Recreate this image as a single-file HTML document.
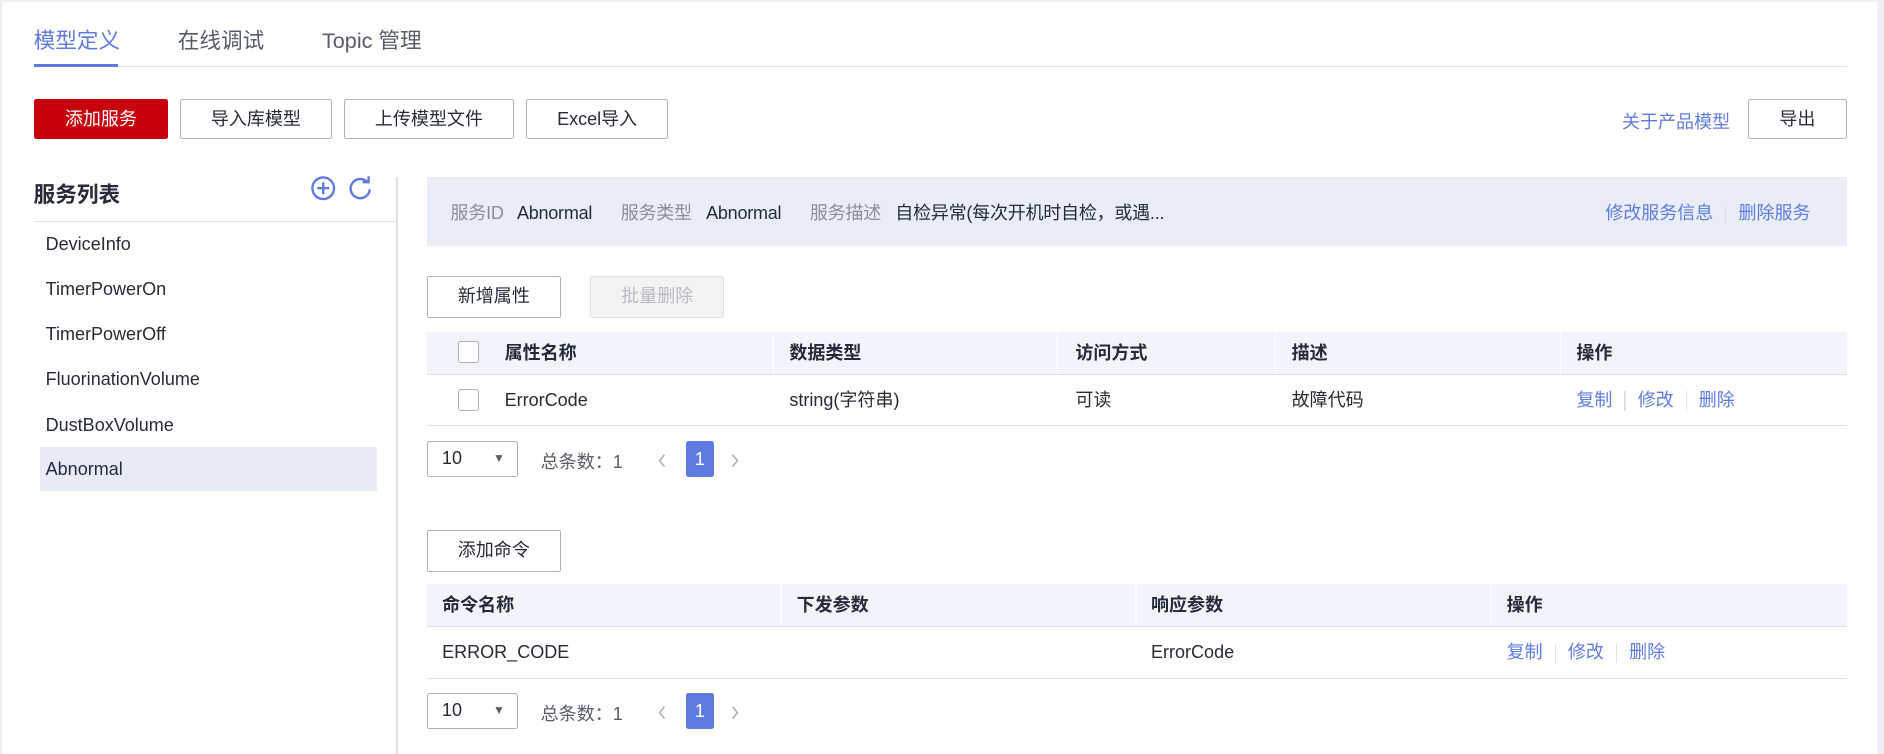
<!DOCTYPE html>
<html><head><meta charset="utf-8"><style>
html,body{margin:0;padding:0;width:1884px;height:754px;overflow:hidden;background:#eef0f5}
#w{zoom:1.2015;position:relative;width:1568px;height:628px;font-family:"Liberation Sans","Noto Sans CJK SC",sans-serif;color:#252b3a;font-size:15px}
#p{position:absolute;left:2px;top:2px;width:1560px;height:626px;background:#fff}
.a{position:absolute;white-space:nowrap}
.btn{position:absolute;box-sizing:border-box;border:1px solid #adb0b8;border-radius:2px;background:#fff;text-align:center;font-size:15px;color:#252b3a}
.blue{color:#5e7ce0}
.g{color:#8a8e99}
.hd{position:absolute;background:#f1f4fb;height:35px}
.c{position:absolute;top:0;white-space:nowrap}
.vl{position:absolute;width:1px;background:#fff}
.cb{position:absolute;width:18px;height:18px;border:1px solid #adb0b8;border-radius:2px;box-sizing:border-box;background:#fff}
.sep{display:inline-block;width:1px;height:16px;background:#dfe1e6;vertical-align:middle;margin:0 10px}
</style></head><body><div id="w"><div id="p">
<div class="a blue" style="left:26px;top:18px;font-size:18px">模型定义</div>
<div class="a" style="left:146px;top:18px;font-size:18px;color:#575d6c">在线调试</div>
<div class="a" style="left:266px;top:18px;font-size:18px;color:#575d6c">Topic 管理</div>
<div class="a" style="left:26px;top:53px;width:1509px;height:1px;background:#dfe1e6"></div>
<div class="a" style="left:26px;top:51px;width:70px;height:3px;background:#5e7ce0"></div>
<div class="btn" style="left:26px;top:80px;width:112px;height:34px;line-height:32px;background:#c7000b;border-color:#c7000b;color:#fff">添加服务</div>
<div class="btn" style="left:148px;top:80px;width:126px;height:34px;line-height:32px">导入库模型</div>
<div class="btn" style="left:284px;top:80px;width:142px;height:34px;line-height:32px">上传模型文件</div>
<div class="btn" style="left:436px;top:80px;width:118px;height:34px;line-height:32px">Excel导入</div>
<div class="a blue" style="left:1348px;top:88px">关于产品模型</div>
<div class="btn" style="left:1453px;top:80px;width:82px;height:34px;line-height:32px">导出</div>
<div class="a" style="left:26px;top:146px;font-size:18px;font-weight:bold">服务列表</div>
<svg class="a" style="left:256px;top:144px" width="22" height="22" viewBox="0 0 22 22"><circle cx="11" cy="11" r="9" fill="none" stroke="#5e7ce0" stroke-width="2"/><path d="M11 6v10M6 11h10" stroke="#5e7ce0" stroke-width="2"/></svg>
<svg class="a" style="left:287px;top:144px" width="22" height="22" viewBox="0 0 22 22"><path d="M17 6A8 8 0 1 0 19 12" fill="none" stroke="#5e7ce0" stroke-width="2"/><path d="M13 6h5V1" fill="none" stroke="#5e7ce0" stroke-width="2"/></svg>
<div class="a" style="left:26px;top:182px;width:302px;height:1px;background:#dfe1e6"></div>
<div class="a" style="left:328px;top:145px;width:1px;height:483px;background:#dfe1e6"></div>
<div class="a" style="left:31px;top:370px;width:281px;height:37px;background:#e8ecf8"></div>
<div class="a" style="left:36px;top:193px">DeviceInfo</div>
<div class="a" style="left:36px;top:230px">TimerPowerOn</div>
<div class="a" style="left:36px;top:268px">TimerPowerOff</div>
<div class="a" style="left:36px;top:305px">FluorinationVolume</div>
<div class="a" style="left:36px;top:343px">DustBoxVolume</div>
<div class="a" style="left:36px;top:380px">Abnormal</div>
<div class="a" style="left:353px;top:145px;width:1182px;height:58px;background:#e9edf8"></div>
<div class="a" style="left:373px;top:164px;letter-spacing:-0.2px"><span class="g">服务ID</span>&nbsp;&nbsp; Abnormal&nbsp;&nbsp;&nbsp;&nbsp;&nbsp; <span class="g">服务类型</span>&nbsp;&nbsp; Abnormal&nbsp;&nbsp;&nbsp;&nbsp;&nbsp; <span class="g">服务描述</span>&nbsp;&nbsp; 自检异常(每次开机时自检，或遇...</div>
<div class="a blue" style="left:1334px;top:164px">修改服务信息<span class="sep"></span>删除服务</div>
<div class="btn" style="left:353px;top:228px;width:112px;height:35px;line-height:33px">新增属性</div>
<div class="btn" style="left:489px;top:228px;width:112px;height:35px;line-height:33px;background:#f3f3f3;border-color:#e0e0e0;color:#b8bac0">批量删除</div>
<div class="hd" style="left:353px;top:274px;width:1182px;border-bottom:1px solid #dfe1e6;line-height:35px;font-weight:bold">
<div class="cb" style="left:26px;top:8px"></div>
<span class="c" style="left:65px">属性名称</span><span class="c" style="left:302px">数据类型</span><span class="c" style="left:540px">访问方式</span><span class="c" style="left:720px">描述</span><span class="c" style="left:957px">操作</span>
<div class="vl" style="left:288px;top:0;height:35px"></div><div class="vl" style="left:525px;top:0;height:35px"></div><div class="vl" style="left:706px;top:0;height:35px"></div><div class="vl" style="left:943px;top:0;height:35px"></div>
</div>
<div class="a" style="left:353px;top:310px;width:1182px;height:42px;border-bottom:1px solid #dfe1e6;line-height:42px">
<div class="cb" style="left:26px;top:12px"></div>
<span class="c" style="left:65px">ErrorCode</span><span class="c" style="left:302px">string(字符串)</span><span class="c" style="left:540px">可读</span><span class="c" style="left:720px">故障代码</span><span class="c blue" style="left:957px">复制<span class="sep"></span>修改<span class="sep"></span>删除</span>
</div>
<div class="btn" style="left:353px;top:365px;width:76px;height:30px;line-height:28px;text-align:left;padding-left:12px">10<span style="position:absolute;right:10px;font-size:10px;color:#575d6c">▼</span></div>
<div class="a" style="left:448px;top:371px;color:#575d6c">总条数：1</div>
<svg class="a" style="left:544px;top:373px" width="10" height="16" viewBox="0 0 10 16"><path d="M7 3L3 8l4 5" fill="none" stroke="#adb0b8" stroke-width="1.3"/></svg>
<div class="a" style="left:569px;top:365px;width:23px;height:30px;background:#5e7ce0;color:#fff;text-align:center;line-height:30px;border-radius:2px">1</div>
<svg class="a" style="left:605px;top:373px" width="10" height="16" viewBox="0 0 10 16"><path d="M3 3l4 5-4 5" fill="none" stroke="#adb0b8" stroke-width="1.3"/></svg>
<div class="btn" style="left:353px;top:439px;width:112px;height:35px;line-height:33px">添加命令</div>
<div class="hd" style="left:353px;top:484px;width:1182px;border-bottom:1px solid #dfe1e6;line-height:35px;font-weight:bold">
<span class="c" style="left:13px">命令名称</span><span class="c" style="left:308px">下发参数</span><span class="c" style="left:603px">响应参数</span><span class="c" style="left:899px">操作</span>
<div class="vl" style="left:295px;top:0;height:35px"></div><div class="vl" style="left:590px;top:0;height:35px"></div><div class="vl" style="left:886px;top:0;height:35px"></div>
</div>
<div class="a" style="left:353px;top:520px;width:1182px;height:42px;border-bottom:1px solid #dfe1e6;line-height:42px">
<span class="c" style="left:13px">ERROR_CODE</span><span class="c" style="left:603px">ErrorCode</span><span class="c blue" style="left:899px">复制<span class="sep"></span>修改<span class="sep"></span>删除</span>
</div>
<div class="btn" style="left:353px;top:575px;width:76px;height:30px;line-height:28px;text-align:left;padding-left:12px">10<span style="position:absolute;right:10px;font-size:10px;color:#575d6c">▼</span></div>
<div class="a" style="left:448px;top:581px;color:#575d6c">总条数：1</div>
<svg class="a" style="left:544px;top:583px" width="10" height="16" viewBox="0 0 10 16"><path d="M7 3L3 8l4 5" fill="none" stroke="#adb0b8" stroke-width="1.3"/></svg>
<div class="a" style="left:569px;top:575px;width:23px;height:30px;background:#5e7ce0;color:#fff;text-align:center;line-height:30px;border-radius:2px">1</div>
<svg class="a" style="left:605px;top:583px" width="10" height="16" viewBox="0 0 10 16"><path d="M3 3l4 5-4 5" fill="none" stroke="#adb0b8" stroke-width="1.3"/></svg>
</div></div></body></html>
